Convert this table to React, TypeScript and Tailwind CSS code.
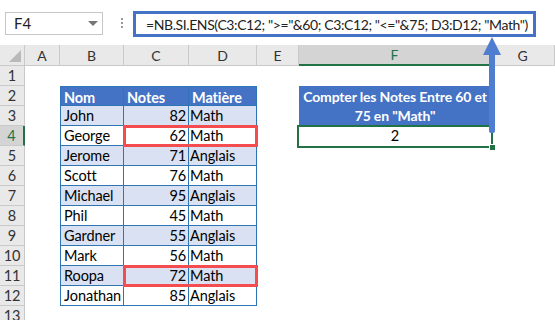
import React from 'react';

const COLS = ['A', 'B', 'C', 'D', 'E', 'F', 'G'];

const ROWS: [string, number, string][] = [
  ['John', 82, 'Math'],
  ['George', 62, 'Math'],
  ['Jerome', 71, 'Anglais'],
  ['Scott', 76, 'Math'],
  ['Michael', 95, 'Anglais'],
  ['Phil', 45, 'Math'],
  ['Gardner', 55, 'Anglais'],
  ['Mark', 56, 'Math'],
  ['Roopa', 72, 'Math'],
  ['Jonathan', 85, 'Anglais'],
];

const FORMULA = '=NB.SI.ENS(C3:C12; ">="&60; C3:C12; "<="&75; D3:D12; "Math")';

function RowHead({ n, active }: { n: number; active?: boolean }) {
  return (
    <div
      className={
        active
          ? 'flex items-center justify-center border-b border-r-2 border-b-[#c9c9c9] border-r-[#217346] bg-[#d4d4d4] text-[#217346]'
          : 'flex items-center justify-center border-b border-r border-[#c9c9c9] bg-[#e9e9e9] text-[#333]'
      }
    >
      {n}
    </div>
  );
}

function Empty() {
  return <div />;
}

export default function App() {
  return (
    <div className="relative h-[320px] w-[555px] overflow-hidden bg-white font-[Lato,sans-serif] text-[14.5px] tracking-[-0.1px] text-black">
      {/* formula bar */}
      <div className="flex h-[45px] items-start pt-[11px]">
        <div className="ml-[5px] mt-px flex h-[23px] w-[98px] items-center justify-between border border-[#c6c6c6] pl-[8px] pr-[4px] text-[15px] text-[#222]">
          <span>F4</span>
          <span className="h-0 w-0 border-x-[5px] border-t-[5px] border-x-transparent border-t-[#777]" />
        </div>
        <div className="ml-[18px] mt-[7px] flex flex-col gap-[2px]">
          <span className="h-[2px] w-[2px] bg-[#999]" />
          <span className="h-[2px] w-[2px] bg-[#999]" />
          <span className="h-[2px] w-[2px] bg-[#999]" />
        </div>
        <div className="ml-[10px] flex h-[26px] w-[403px] items-center whitespace-nowrap border-[3px] border-[#4472c4] pl-[10px] text-[14px] tracking-[-0.4px] text-[#222]">
          {FORMULA}
        </div>
      </div>

      {/* sheet */}
      <div className="grid grid-cols-[25px_35px_64px_65px_68px_42px_192px_1fr] grid-rows-[21px_repeat(13,20px)]">
        {/* column headers */}
        <div className="relative border-b border-r border-[#c9c9c9] bg-[#e9e9e9]">
          <span className="absolute bottom-[3px] right-[3px] h-0 w-0 border-b-[12px] border-l-[12px] border-b-[#b9b9b9] border-l-transparent" />
        </div>
        {COLS.map((c) =>
          c === 'F' ? (
            <div
              key={c}
              className="flex items-center justify-center border-b-2 border-r border-b-[#217346] border-r-[#c9c9c9] bg-[#d4d4d4] text-[14px] text-[#217346]"
            >
              {c}
            </div>
          ) : (
            <div
              key={c}
              className="flex items-center justify-center border-b border-r border-[#c9c9c9] bg-[#e9e9e9] text-[14px] text-[#333]"
            >
              {c}
            </div>
          ),
        )}

        {/* row 1 */}
        <RowHead n={1} />
        {COLS.map((c) => (
          <Empty key={c} />
        ))}

        {/* row 2: table header + merged F2:F3 */}
        <RowHead n={2} />
        <Empty />
        <div className="border-x border-y border-[#2e75b6] bg-[#4472c4] pl-[3px] font-bold text-white">Nom</div>
        <div className="border-y border-r border-[#2e75b6] bg-[#4472c4] pl-[3px] font-bold text-white">Notes</div>
        <div className="border-y border-r border-[#2e75b6] bg-[#4472c4] pl-[3px] font-bold text-white">Matière</div>
        <Empty />
        <div className="row-span-2 flex flex-col items-center justify-center bg-[#4472c4] pb-px text-[14px] font-bold leading-[19px] tracking-[-0.15px] text-white">
          <span>Compter les Notes Entre 60 et</span>
          <span>75 en "Math"</span>
        </div>
        <Empty />

        {/* rows 3-12 */}
        {ROWS.map(([name, note, subject], i) => {
          const shade = i % 2 === 0 ? 'bg-[#d9e1f2]' : 'bg-white';
          return (
            <React.Fragment key={name}>
              <RowHead n={i + 3} active={i === 1} />
              <Empty />
              <div className={`border-x border-b border-[#2e75b6] pl-[3px] leading-[19px] ${shade}`}>{name}</div>
              <div className={`border-b border-r border-[#2e75b6] pr-[2px] text-right leading-[19px] ${shade}`}>{note}</div>
              <div className={`border-b border-r border-[#2e75b6] pl-px leading-[19px] ${shade}`}>{subject}</div>
              <Empty />
              {i === 0 ? null : i === 1 ? (
                <div className="flex items-center justify-center">2</div>
              ) : (
                <Empty />
              )}
              <Empty />
            </React.Fragment>
          );
        })}

        {/* row 13 */}
        <RowHead n={13} />
        {COLS.map((c) => (
          <Empty key={c} />
        ))}
      </div>

      {/* rule highlights */}
      <div className="pointer-events-none absolute left-[123px] top-[125px] h-[22px] w-[135px] border-[3px] border-[#f44c4f]" />
      <div className="pointer-events-none absolute left-[123px] top-[265px] h-[22px] w-[135px] border-[3px] border-[#f44c4f]" />

      {/* active cell F4 */}
      <div className="pointer-events-none absolute left-[297px] top-[125px] h-[23px] w-[196px] border-2 border-[#217346]" />
      <div className="pointer-events-none absolute left-[489px] top-[144px] h-[7px] w-[7px] border border-white bg-[#217346]" />

      {/* arrow from formula to result */}
      <svg className="pointer-events-none absolute left-0 top-0" width="555" height="320">
        <rect x="489" y="50" width="6" height="83" rx="2" fill="#4f7dd0" />
        <polygon points="492,37 483,55 501,55" fill="#4f7dd0" />
      </svg>
    </div>
  );
}
